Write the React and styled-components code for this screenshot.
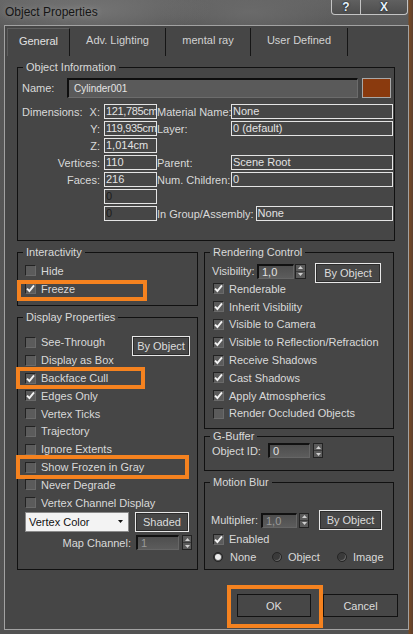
import React from 'react';
import styled, { createGlobalStyle } from 'styled-components';

const COLORS = {
  panel: '#464646',
  text: '#d9d9d9',
  groupLine: '#111111',
  fieldLine: '#e4e4e4',
  orange: '#f5821f',
};
const FONT = `"Liberation Sans", Arial, sans-serif`;

const GlobalStyle = createGlobalStyle`
  html, body { margin: 0; padding: 0; background: #555; }
  body { font-family: ${FONT}; font-size: 11px; color: ${COLORS.text}; }
  * { box-sizing: border-box; }
`;

const Window = styled.div`
  width: 413px;
  height: 634px;
  display: flex;
  flex-direction: column;
  overflow: hidden;
  background:
    linear-gradient(90deg, transparent 408px, #7a4a22 409px, #5c4030 413px),
    radial-gradient(ellipse 120px 30px at 90px 10px, #747474, transparent),
    radial-gradient(ellipse 90px 25px at 250px 12px, #6a6a6a, transparent),
    linear-gradient(180deg, #646464 0%, #585858 30px, #525252 100%);
`;

const TitleBar = styled.div`
  height: 25px;
  flex: none;
  display: flex;
  align-items: flex-start;
  padding-left: 5px;
`;

const Title = styled.div`
  font-size: 12px;
  line-height: 24px;
  color: #151515;
  text-shadow: 0 0 6px rgba(255, 255, 255, 0.35);
`;

const Controls = styled.div`
  margin-left: auto;
  margin-right: 5px;
  display: flex;
  height: 15px;
  border: 1px solid #c4c4c4;
  border-top: none;
  border-radius: 0 0 4px 4px;
  background: linear-gradient(180deg, #606060, #4e4e4e);
  overflow: hidden;
`;

const ControlButton = styled.div`
  width: ${(p) => p.$w}px;
  display: flex;
  align-items: center;
  justify-content: center;
  font-weight: bold;
  font-size: 12px;
  color: #e8f1fa;
  text-shadow: 0 0 2px #1a2a3a, 0 0 1px #000;
  & + & {
    border-left: 1px solid #c4c4c4;
  }
`;

const Client = styled.div`
  flex: 1;
  margin: 0 4px 4px 4px;
  border: 1px solid #a2a2a2;
  background: ${COLORS.panel};
  display: flex;
  flex-direction: column;
`;

const TabBar = styled.div`
  height: 30px;
  flex: none;
  display: flex;
  align-items: flex-end;
  padding-left: 2px;
`;

const Tab = styled.div`
  width: ${(p) => p.$w}px;
  height: 28px;
  line-height: 25px;
  text-align: center;
  color: ${(p) => (p.$active ? '#e2e2e2' : '#d2d2d2')};
  border-right: 1px solid #151515;
  border-left: ${(p) => (p.$active ? '1px solid #5e5e5e' : 'none')};
  border-top: ${(p) => (p.$active ? '1px solid #5e5e5e' : 'none')};
`;

const Panel = styled.div`
  padding: 5px 13px 0 12px;
`;

const Group = styled.fieldset`
  margin: 0;
  padding: 0;
  min-width: 0;
  border: 1px solid ${COLORS.groupLine};
`;

const Legend = styled.legend`
  margin-left: 5px;
  padding: 0 3px;
  line-height: 13px;
  font-size: 11px;
  color: ${COLORS.text};
`;

const GroupBody = styled.div`
  padding: ${(p) => p.$pad};
  display: flex;
  flex-direction: column;
`;

const NameRow = styled.div`
  height: 20px;
  margin-bottom: 6px;
  display: flex;
  align-items: center;
`;

const NameLabel = styled.span`
  width: 45px;
`;

const NameInput = styled.div`
  width: 291px;
  height: 20px;
  padding: 2px 0 0 5px;
  background: #5a5a5a;
  border-top: 2px solid #0e0e0e;
  border-left: 2px solid #0e0e0e;
  border-right: 1px solid #6c6c6c;
  border-bottom: 1px solid #6c6c6c;
  font-size: 10px;
  line-height: 14px;
  color: #e4e4e4;
`;

const Swatch = styled.div`
  width: 29px;
  height: 20px;
  margin-left: 4px;
  background: #8a3a0e;
  border: 1px solid #a8a8a8;
`;

const InfoGrid = styled.div`
  display: grid;
  grid-template-columns: 82px 53px 74px 1fr;
  grid-auto-rows: 15px;
  row-gap: 2px;
`;

const CellLabel = styled.span`
  grid-column: ${(p) => p.$col || 'auto'};
  display: flex;
  align-items: center;
  justify-content: ${(p) => (p.$split ? 'space-between' : p.$right ? 'flex-end' : 'flex-start')};
  padding-right: ${(p) => (p.$right || p.$split ? '4px' : '0')};
  white-space: nowrap;
  overflow: visible;
`;

const Field = styled.div`
  grid-column: ${(p) => p.$col || 'auto'};
  height: 15px;
  border: 1px solid ${COLORS.fieldLine};
  padding-left: 1px;
  line-height: 13px;
  white-space: nowrap;
  overflow: hidden;
  letter-spacing: ${(p) => (p.$tight ? '-0.35px' : 'normal')};
  color: ${(p) => (p.$dim ? '#1c1c1c' : '#e2e2e2')};
  flex: ${(p) => (p.$grow ? 1 : 'none')};
`;

const Split = styled.div`
  grid-column: 3 / 5;
  display: flex;
  align-items: center;
  gap: 2px;
`;

const Columns = styled.div`
  margin-top: 5px;
  display: grid;
  grid-template-columns: 181px 190px;
  column-gap: 6px;
  align-items: start;
`;

const Column = styled.div`
  display: flex;
  flex-direction: column;
`;

const Spaced = styled.div`
  margin-top: ${(p) => p.$top}px;
`;

const Row = styled.div`
  position: relative;
  display: flex;
  align-items: center;
  gap: ${(p) => (p.$gap === undefined ? 5 : p.$gap)}px;
  height: ${(p) => p.$h || 17.8}px;
  flex: none;
  white-space: nowrap;
`;

const Box = styled.span`
  width: 11px;
  height: 11px;
  flex: none;
  display: inline-flex;
  align-items: center;
  justify-content: center;
  background: #5b5b5b;
  border-top: 1px solid #222;
  border-left: 1px solid #222;
  border-right: 1px solid #6a6a6a;
  border-bottom: 1px solid #6a6a6a;
`;

const Callout = styled.span`
  position: absolute;
  left: ${(p) => p.$l}px;
  top: ${(p) => p.$t}px;
  width: ${(p) => p.$w}px;
  height: ${(p) => p.$h}px;
  border: 4px solid ${COLORS.orange};
  pointer-events: none;
`;

const Button = styled.div`
  width: ${(p) => p.$w}px;
  height: ${(p) => p.$h || 20}px;
  flex: none;
  display: flex;
  align-items: center;
  justify-content: center;
  background: #474747;
  border: 1px solid ${(p) => (p.$dark ? '#121212' : '#e8e8e8')};
  box-shadow: ${(p) => (p.$dark ? 'none' : 'inset 0 0 0 1px #2c2c2c')};
  color: #dcdcdc;
  margin-left: ${(p) => (p.$push ? 'auto' : '0')};
  align-self: ${(p) => (p.$top !== undefined ? 'flex-start' : 'center')};
  margin-top: ${(p) => p.$top || 0}px;
  position: relative;
`;

const Select = styled.div`
  width: 104px;
  height: 20px;
  display: flex;
  align-items: center;
  justify-content: space-between;
  padding: 0 5px 0 3px;
  background: #f3f3f3;
  border: 1px solid #8a8a8a;
  color: #111;
`;

const SpinInput = styled.div`
  width: ${(p) => p.$w}px;
  height: ${(p) => p.$h || 15}px;
  padding-left: 3px;
  background: linear-gradient(180deg, #4e4e4e, #5c5c5c);
  border-top: 2px solid #111;
  border-left: 2px solid #111;
  border-right: 1px solid #666;
  border-bottom: 1px solid #666;
  line-height: 12px;
  color: ${(p) => (p.$off ? '#9a9a9a' : '#e0e0e0')};
`;

const Arrows = styled.span`
  width: ${(p) => p.$w || 10}px;
  height: ${(p) => p.$h || 15}px;
  display: flex;
  flex-direction: column;
  border: 1px solid #222;
  background: #5a5a5a;
  margin-left: ${(p) => p.$gap || 2}px;
`;

const ArrowHalf = styled.span`
  flex: 1;
  display: flex;
  align-items: center;
  justify-content: center;
  & + & {
    border-top: 1px solid #3a3a3a;
  }
`;

const MapLabel = styled.span`
  flex: 1;
  text-align: right;
  padding-right: 5px;
`;

const RadioItem = styled.span`
  width: ${(p) => p.$w}px;
  display: flex;
  align-items: center;
  gap: ${(p) => p.$gap}px;
`;

const RadioDot = styled.span`
  width: 10px;
  height: 10px;
  border-radius: 50%;
  flex: none;
  display: flex;
  align-items: center;
  justify-content: center;
  background: #3a3a3a;
  border: 1px solid #252525;
  box-shadow: inset -1px -1px 0 #6a6a6a;
  &::after {
    content: '';
    width: 6px;
    height: 6px;
    border-radius: 50%;
    background: ${(p) => (p.$on ? '#ededed' : 'transparent')};
  }
`;

const Footer = styled.div`
  margin-top: 24px;
  padding-right: 10px;
  display: flex;
  justify-content: flex-end;
  gap: 12px;
`;

function Tick() {
  return (
    <svg width="9" height="9" viewBox="0 0 9 9">
      <path d="M1 4.6 L3.4 7 L8 1.4" fill="none" stroke="#f4f4f4" strokeWidth="1.9" />
    </svg>
  );
}

function Check({ label, checked, callout, children }) {
  return (
    <Row>
      <Box>{checked && <Tick />}</Box>
      <span>{label}</span>
      {children}
      {callout && <Callout $l={callout[0]} $t={callout[1]} $w={callout[2]} $h={callout[3]} />}
    </Row>
  );
}

function Tri({ down, color = '#cfcfcf' }) {
  return (
    <svg width="5" height="3" viewBox="0 0 5 3">
      <path d={down ? 'M0 0 H5 L2.5 3 Z' : 'M0 3 H5 L2.5 0 Z'} fill={color} />
    </svg>
  );
}

function Spinner({ value, w, aw, gap, off }) {
  return (
    <>
      <SpinInput $w={w} $off={off}>{value}</SpinInput>
      <Arrows $w={aw} $gap={gap}>
        <ArrowHalf><Tri /></ArrowHalf>
        <ArrowHalf><Tri down /></ArrowHalf>
      </Arrows>
    </>
  );
}

const renderFlags = [
  ['Renderable', true],
  ['Inherit Visibility', true],
  ['Visible to Camera', true],
  ['Visible to Reflection/Refraction', true],
  ['Receive Shadows', true],
  ['Cast Shadows', true],
  ['Apply Atmospherics', true],
  ['Render Occluded Objects', false],
];

const displayFlags = [
  ['Display as Box', false],
  ['Backface Cull', true, [-9, -2, 129, 22]],
  ['Edges Only', true],
  ['Vertex Ticks', false],
  ['Trajectory', false],
  ['Ignore Extents', false],
  ['Show Frozen in Gray', false, [-9, -3, 173, 24]],
  ['Never Degrade', false],
  ['Vertex Channel Display', false],
];

export default function App() {
  return (
    <>
      <GlobalStyle />
      <Window>
        <TitleBar>
          <Title>Object Properties</Title>
          <Controls>
            <ControlButton $w={28}>?</ControlButton>
            <ControlButton $w={47}>X</ControlButton>
          </Controls>
        </TitleBar>
        <Client>
          <TabBar>
            <Tab $w={63} $active>General</Tab>
            <Tab $w={96}>Adv. Lighting</Tab>
            <Tab $w={85}>mental ray</Tab>
            <Tab $w={97}>User Defined</Tab>
          </TabBar>
          <Panel>
            <Group>
              <Legend>Object Information</Legend>
              <GroupBody $pad="4px 1px 19px 4px">
                <NameRow>
                  <NameLabel>Name:</NameLabel>
                  <NameInput>Cylinder001</NameInput>
                  <Swatch />
                </NameRow>
                <InfoGrid>
                  <CellLabel $split><span>Dimensions:</span><span>X:</span></CellLabel>
                  <Field $tight>121,785cm</Field>
                  <CellLabel>Material Name:</CellLabel>
                  <Field>None</Field>

                  <CellLabel $right>Y:</CellLabel>
                  <Field $tight>119,935cm</Field>
                  <CellLabel>Layer:</CellLabel>
                  <Field>0 (default)</Field>

                  <CellLabel $right>Z:</CellLabel>
                  <Field>1,014cm</Field>
                  <span />
                  <span />

                  <CellLabel $right>Vertices:</CellLabel>
                  <Field>110</Field>
                  <CellLabel>Parent:</CellLabel>
                  <Field>Scene Root</Field>

                  <CellLabel $right>Faces:</CellLabel>
                  <Field>216</Field>
                  <CellLabel>Num. Children:</CellLabel>
                  <Field>0</Field>

                  <Field $col="2" $dim>0</Field>
                  <span />
                  <span />

                  <Field $col="2" $dim>0</Field>
                  <Split>
                    <span>In Group/Assembly:</span>
                    <Field $grow>None</Field>
                  </Split>
                </InfoGrid>
              </GroupBody>
            </Group>

            <Columns>
              <Column>
                <Group>
                  <Legend>Interactivity</Legend>
                  <GroupBody $pad="3px 7px 7px 7px">
                    <Check label="Hide" />
                    <Check label="Freeze" checked callout={[-8, 0, 130, 21]} />
                  </GroupBody>
                </Group>
                <Spaced $top={5}>
                  <Group>
                    <Legend>Display Properties</Legend>
                    <GroupBody $pad="10px 7px 18px 7px">
                      <Check label="See-Through">
                        <Button $w={58} $push $top={2}>By Object</Button>
                      </Check>
                      {displayFlags.map(([label, on, callout]) => (
                        <Check key={label} label={label} checked={on} callout={callout} />
                      ))}
                      <Row $h={20} $gap={6}>
                        <Select>
                          <span>Vertex Color</span>
                          <Tri down color="#111" />
                        </Select>
                        <Button $w={54} $h={20}>Shaded</Button>
                      </Row>
                      <Spaced $top={3}>
                        <Row $h={16} $gap={0} style={{ marginRight: -2 }}>
                          <MapLabel>Map Channel:</MapLabel>
                          <Spinner value="1" w={43} gap={3} off />
                        </Row>
                      </Spaced>
                    </GroupBody>
                  </Group>
                </Spaced>
              </Column>

              <Column>
                <Group>
                  <Legend>Rendering Control</Legend>
                  <GroupBody $pad="3px 6px 6px 8px">
                    <Row $h={18} $gap={0}>
                      <span style={{ width: 45, marginLeft: -1 }}>Visibility:</span>
                      <Spinner value="1,0" w={37} aw={11} gap={1} />
                      <Button $w={66} $top={1} style={{ marginLeft: 9 }}>By Object</Button>
                    </Row>
                    {renderFlags.map(([label, on]) => (
                      <Check key={label} label={label} checked={on} />
                    ))}
                  </GroupBody>
                </Group>
                <Spaced $top={1}>
                  <Group>
                    <Legend>G-Buffer</Legend>
                    <GroupBody $pad="0 6px 12px 7px">
                      <Row $h={15} $gap={0}>
                        <span style={{ width: 56 }}>Object ID:</span>
                        <Spinner value="0" w={42} gap={3} />
                      </Row>
                    </GroupBody>
                  </Group>
                </Spaced>
                <Spaced $top={5}>
                  <Group>
                    <Legend>Motion Blur</Legend>
                    <GroupBody $pad="21px 6px 3px 8px">
                      <Row $h={20} $gap={0}>
                        <span style={{ width: 50, marginLeft: -2 }}>Multiplier:</span>
                        <Spinner value="1,0" w={36} gap={2} off />
                        <Button $w={63} style={{ marginLeft: 10 }}>By Object</Button>
                      </Row>
                      <Check label="Enabled" checked />
                      <Row $h={18} $gap={0}>
                        <RadioItem $w={59} $gap={7}><RadioDot $on />None</RadioItem>
                        <RadioItem $w={65} $gap={6}><RadioDot />Object</RadioItem>
                        <RadioItem $w={50} $gap={6}><RadioDot />Image</RadioItem>
                      </Row>
                    </GroupBody>
                  </Group>
                </Spaced>
              </Column>
            </Columns>
          </Panel>
          <Footer>
            <Button $w={74} $h={23} $dark>
              OK
              <Callout $l={-11} $t={-10} $w={96} $h={43} />
            </Button>
            <Button $w={75} $h={23} $dark>Cancel</Button>
          </Footer>
        </Client>
      </Window>
    </>
  );
}
